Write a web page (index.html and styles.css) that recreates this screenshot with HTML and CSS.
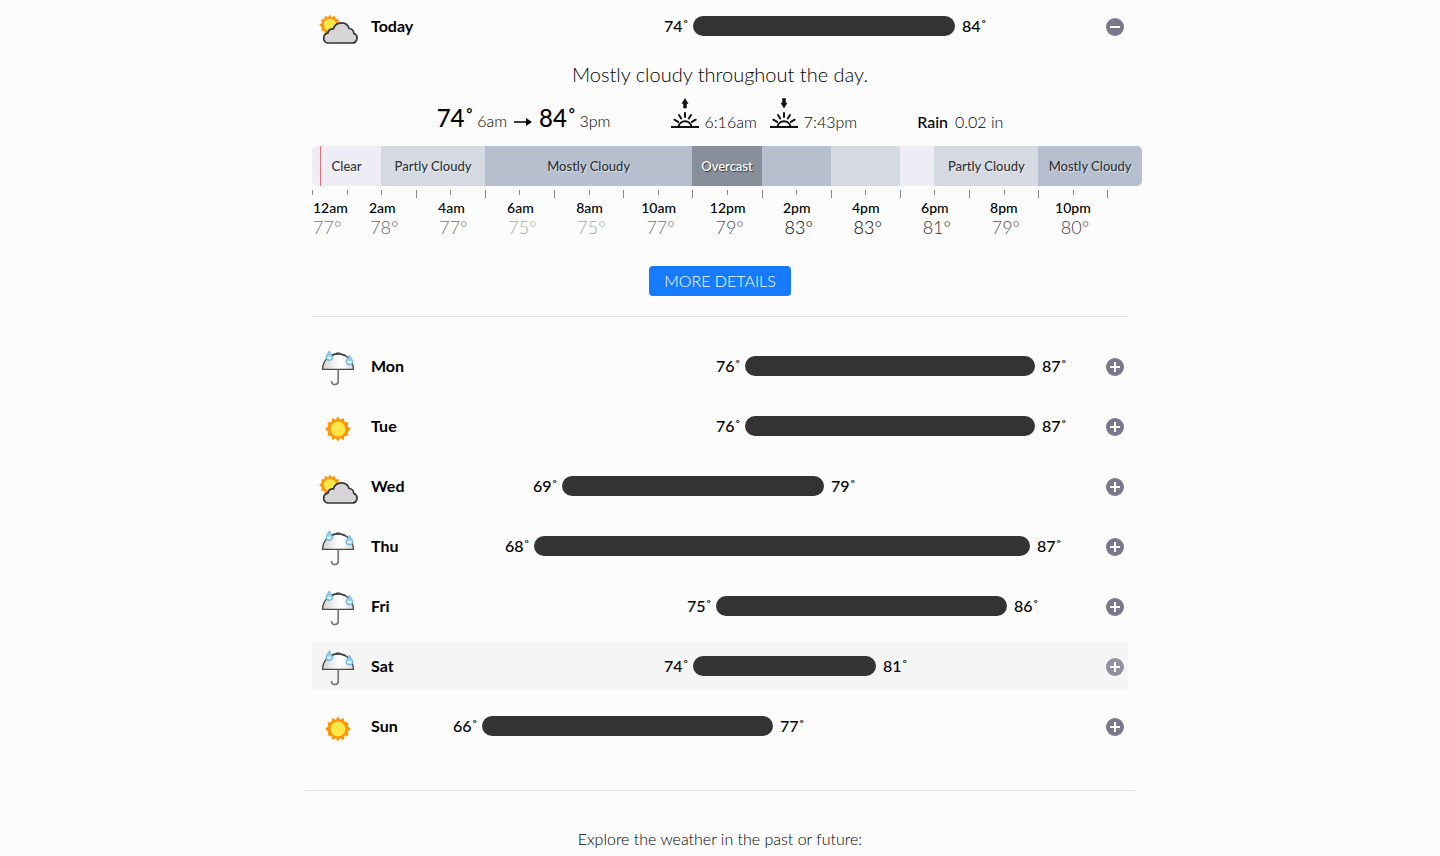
FILE: index.html
```html
<!DOCTYPE html>
<html lang="en">
<head>
<meta charset="utf-8">
<meta name="viewport" content="width=device-width, initial-scale=1">
<title>Weekly forecast</title>
<link rel="stylesheet" href="styles.css">
</head>
<body>
<svg class="sprite" width="0" height="0" aria-hidden="true">
  <defs>
    <linearGradient id="canopy" x1="0" x2="1" y1="0" y2="0">
      <stop offset="0" stop-color="#cfcfcf"/><stop offset=".35" stop-color="#f0f0f0"/><stop offset=".6" stop-color="#fff"/><stop offset="1" stop-color="#d8d8d8"/>
    </linearGradient>
    <symbol id="star" viewBox="0 0 26 26">
      <path fill="#ff9505" d="M13 .5l2.200 3.200 3.600-1.600.8 3.900 3.900.5-.8 3.800L26 13l-3.300 2.700.8 3.800-3.900.5-.8 3.900-3.600-1.600L13 25.500l-2.200-3.200-3.600 1.600-.8-3.900-3.900-.5.8-3.800L0 13l3.300-2.700-.8-3.800 3.900-.5.8-3.900 3.600 1.600z"/>
      <circle cx="13" cy="13" r="7.400" fill="#ffe74a"/>
    </symbol>
    <symbol id="sunny" viewBox="0 0 40 40">
      <use href="#star" x="7" y="8" width="26" height="26"/>
    </symbol>
    <symbol id="partly" viewBox="0 0 40 40">
      <use href="#star" x="1" y="6" width="22" height="22"/>
      <path fill="#d5d5d5" stroke="#333" stroke-width="1.700" stroke-linejoin="round" d="M9.500 35h24.500a4.900 4.900 0 0 0 1.800-9.500 5 5 0 0 0-4.600-5 8.300 8.300 0 0 0-15.800.4 4.600 4.600 0 0 0-5.500 4.300A5 5 0 0 0 9.500 35z"/>
    </symbol>
    <symbol id="rain" viewBox="0 0 40 40">
      <path fill="url(#canopy)" stroke="#484848" stroke-width="1.300" stroke-linejoin="round" d="M4.500 21.300C4.800 12 11.500 6 20 6s15.200 6 15.500 15.300z"/>
      <path fill="none" stroke="#444" stroke-width="1.500" stroke-linecap="round" d="M13 7.500q7-3.500 14 0M18.500 5.200h3"/>
      <path fill="none" stroke="#777" stroke-width="1.700" stroke-linecap="round" d="M20.200 22v11.500c0 4-6.600 4-6.600.2"/>
      <path fill="#8fd0f5" stroke="#5ba6d6" stroke-width=".8" d="M11.300 2.800c1 2.700 3.300 4.700 3.300 6.500a3.300 3.300 0 0 1-6.600 0c0-1.800 2.300-3.800 3.300-6.500zM31.500 7.300c1 2.700 3.400 4.500 3.400 6.400a3.400 3.400 0 0 1-6.800 0c0-1.900 2.400-3.700 3.400-6.400z"/>
      <path fill="#f2fbff" d="M9 8.800h4.600a2.300 2.300 0 0 1-4.600 0zM29.200 13.200h4.600a2.300 2.300 0 0 1-4.600 0z"/>
    </symbol>
    <symbol id="horizon" viewBox="0 0 28 32">
      <path fill="none" stroke="#111" stroke-width="2" d="M0 29h28"/>
      <path fill="none" stroke="#111" stroke-width="2" stroke-linecap="round" d="M7.500 28.500a6.600 6.500 0 0 1 13 0M14 15v4M8 17l2.200 3.500M20 17l-2.200 3.500M3.300 21.700l3.800 2.200M24.700 21.700l-3.800 2.200"/>
    </symbol>
  </defs>
</svg>

<main class="forecast">
  <section class="week">
    <article class="day">
      <svg class="day-icon" role="img" aria-label="Partly cloudy"><use href="#partly"/></svg>
      <h2 class="day-name">Today</h2>
      <div class="range"><span class="low" style="width:38.92%">74˚</span><span class="bar" style="width:40.31%"></span><span class="high">84˚</span></div>
      <button class="toggle" type="button" aria-expanded="true" aria-label="Hide Today details"><svg viewBox="0 0 18 18"><path d="M4 9h10"/></svg></button>
    </article>

    <section class="details">
      <p class="summary">Mostly cloudy throughout the day.</p>
      <div class="facts">
        <div class="extremes">
          <span class="temp">74˚</span><span class="time">6am</span>
          <svg class="arrow" viewBox="0 0 18 12" aria-hidden="true"><path fill="none" stroke="#000" stroke-width="1.500" d="M0 6h14"/><path d="M12 2l6 4-6 4z"/></svg>
          <span class="temp">84˚</span><span class="time">3pm</span>
        </div>
        <div class="sun-times">
          <svg class="sun-icon" viewBox="0 0 28 32" role="img" aria-label="Sunrise"><use href="#horizon"/><path fill="#111" stroke="#111" stroke-width=".6" stroke-linejoin="round" d="M14 .5l3 5h-1.600V10h-2.800V5.500H11z"/></svg>
          <span class="time">6:16am</span>
          <svg class="sun-icon" viewBox="0 0 28 32" role="img" aria-label="Sunset"><use href="#horizon"/><path fill="#111" stroke="#111" stroke-width=".6" stroke-linejoin="round" d="M14 10l3-5h-1.600V.5h-2.800V5H11z"/></svg>
          <span class="time">7:43pm</span>
        </div>
        <div class="rain"><strong>Rain</strong><span>0.02 in</span></div>
      </div>

      <div class="timeline">
        <div class="sky">
          <span class="clear h2">Clear</span>
          <span class="partly h3">Partly Cloudy</span>
          <span class="mostly h6">Mostly Cloudy</span>
          <span class="overcast h2">Overcast</span>
          <span class="mostly h2"></span>
          <span class="partly h2"></span>
          <span class="clear h1"></span>
          <span class="partly h3">Partly Cloudy</span>
          <span class="mostly h3">Mostly Cloudy</span>
          <i class="now"></i>
        </div>
        <div class="ticks"><i></i><i></i><i></i><i></i><i></i><i></i><i></i><i></i><i></i><i></i><i></i><i></i><i></i><i></i><i></i><i></i><i></i><i></i><i></i><i></i><i></i><i></i><i></i><i></i></div>
        <div class="hours">
          <div class="hour first"><b>12am</b><span class="t77">77°</span></div>
          <div class="hour"><b>2am</b><span class="t78">78°</span></div>
          <div class="hour"><b>4am</b><span class="t77">77°</span></div>
          <div class="hour"><b>6am</b><span class="t75">75°</span></div>
          <div class="hour"><b>8am</b><span class="t75">75°</span></div>
          <div class="hour"><b>10am</b><span class="t77">77°</span></div>
          <div class="hour"><b>12pm</b><span class="t79">79°</span></div>
          <div class="hour"><b>2pm</b><span class="t83">83°</span></div>
          <div class="hour"><b>4pm</b><span class="t83">83°</span></div>
          <div class="hour"><b>6pm</b><span class="t81">81°</span></div>
          <div class="hour"><b>8pm</b><span class="t79">79°</span></div>
          <div class="hour"><b>10pm</b><span class="t80">80°</span></div>
        </div>
      </div>
      <button class="more" type="button">MORE DETAILS</button>
    </section>

    <article class="day">
      <svg class="day-icon" role="img" aria-label="Rain"><use href="#rain"/></svg>
      <h2 class="day-name">Mon</h2>
      <div class="range"><span class="low" style="width:46.92%">76˚</span><span class="bar" style="width:44.62%"></span><span class="high">87˚</span></div>
      <button class="toggle" type="button" aria-expanded="false" aria-label="Show Monday details"><svg viewBox="0 0 18 18"><path d="M4 9h10M9 4v10"/></svg></button>
    </article>
    <article class="day">
      <svg class="day-icon" role="img" aria-label="Clear"><use href="#sunny"/></svg>
      <h2 class="day-name">Tue</h2>
      <div class="range"><span class="low" style="width:46.92%">76˚</span><span class="bar" style="width:44.62%"></span><span class="high">87˚</span></div>
      <button class="toggle" type="button" aria-expanded="false" aria-label="Show Tuesday details"><svg viewBox="0 0 18 18"><path d="M4 9h10M9 4v10"/></svg></button>
    </article>
    <article class="day">
      <svg class="day-icon" role="img" aria-label="Partly cloudy"><use href="#partly"/></svg>
      <h2 class="day-name">Wed</h2>
      <div class="range"><span class="low" style="width:18.77%">69˚</span><span class="bar" style="width:40.31%"></span><span class="high">79˚</span></div>
      <button class="toggle" type="button" aria-expanded="false" aria-label="Show Wednesday details"><svg viewBox="0 0 18 18"><path d="M4 9h10M9 4v10"/></svg></button>
    </article>
    <article class="day">
      <svg class="day-icon" role="img" aria-label="Rain"><use href="#rain"/></svg>
      <h2 class="day-name">Thu</h2>
      <div class="range"><span class="low" style="width:14.46%">68˚</span><span class="bar" style="width:76.31%"></span><span class="high">87˚</span></div>
      <button class="toggle" type="button" aria-expanded="false" aria-label="Show Thursday details"><svg viewBox="0 0 18 18"><path d="M4 9h10M9 4v10"/></svg></button>
    </article>
    <article class="day">
      <svg class="day-icon" role="img" aria-label="Rain"><use href="#rain"/></svg>
      <h2 class="day-name">Fri</h2>
      <div class="range"><span class="low" style="width:42.46%">75˚</span><span class="bar" style="width:44.77%"></span><span class="high">86˚</span></div>
      <button class="toggle" type="button" aria-expanded="false" aria-label="Show Friday details"><svg viewBox="0 0 18 18"><path d="M4 9h10M9 4v10"/></svg></button>
    </article>
    <article class="day active">
      <svg class="day-icon" role="img" aria-label="Rain"><use href="#rain"/></svg>
      <h2 class="day-name">Sat</h2>
      <div class="range"><span class="low" style="width:38.92%">74˚</span><span class="bar" style="width:28.15%"></span><span class="high">81˚</span></div>
      <button class="toggle" type="button" aria-expanded="false" aria-label="Show Saturday details"><svg viewBox="0 0 18 18"><path d="M4 9h10M9 4v10"/></svg></button>
    </article>
    <article class="day">
      <svg class="day-icon" role="img" aria-label="Clear"><use href="#sunny"/></svg>
      <h2 class="day-name">Sun</h2>
      <div class="range"><span class="low" style="width:6.46%">66˚</span><span class="bar" style="width:44.77%"></span><span class="high">77˚</span></div>
      <button class="toggle" type="button" aria-expanded="false" aria-label="Show Sunday details"><svg viewBox="0 0 18 18"><path d="M4 9h10M9 4v10"/></svg></button>
    </article>
  </section>
  <p class="explore">Explore the weather in the past or future:</p>
</main>
</body>
</html>
```

FILE: styles.css
```css
* { box-sizing: border-box; }

body {
  margin: 0;
  background: #fcfcfc;
  color: #000;
  font: 300 16px/20px Lato, sans-serif;
}

h2, p { margin: 0; }
.sprite { display: block; }

.forecast {
  max-width: 830px;
  margin: 0 auto;
  padding-top: 2px;
}

.week { padding: 0 7px; }

.day {
  display: flex;
  align-items: center;
  height: 48px;
  padding-left: 6px;
  border-radius: 3px;
}
.day + .day { margin-top: 12px; }
.day.active { background: #f5f5f5; }

.day-icon {
  width: 40px;
  height: 40px;
  margin-top: 4px;
}
.day-name {
  width: 82px;
  padding-left: 13px;
  font-size: 16px;
  font-weight: 700;
}

.range {
  display: flex;
  flex: 1;
  align-items: center;
  font-weight: 500;
}
.low {
  flex: none;
  padding-right: 4px;
  text-align: right;
}
.bar {
  flex: none;
  height: 20px;
  border-radius: 10px;
  background: #333;
}
.high { padding-left: 7px; }

.toggle {
  width: 38px;
  height: 38px;
  margin-top: 2px;
  padding: 0 4px 0 16px;
  border: 0;
  background: none;
  cursor: pointer;
}
.toggle svg {
  display: block;
  width: 18px;
  height: 18px;
  border-radius: 50%;
  background: #7a778d;
}
.toggle path { stroke: #fff; stroke-width: 2; }
.active .toggle { opacity: 0.8; }

.details {
  display: flex;
  flex-direction: column;
  align-items: center;
  margin-bottom: 25px;
  padding: 12px 0 20px;
  border-bottom: 1px solid #e0e0e0;
}
.summary { font-size: 20px; line-height: 24px; }

.facts {
  display: flex;
  align-self: stretch;
  align-items: flex-end;
  justify-content: center;
  gap: 60px;
  height: 46px;
}
.extremes, .sun-times, .rain { display: flex; align-items: baseline; }
.extremes { gap: 3px; padding-bottom: 1px; }
.temp { font-size: 24px; font-weight: 500; }
.arrow { width: 18px; height: 12px; margin: 4px 4px 0; align-self: center; }
.sun-times { align-items: flex-end; gap: 6px; }
.sun-icon { width: 28px; height: 32px; margin-bottom: 2px; }
.sun-times .time + .sun-icon { margin-left: 7px; }
.rain { gap: 7px; }
.rain strong { font-weight: 500; }

.timeline { align-self: stretch; margin: 14px -14px 0 0; }
.sky {
  position: relative;
  display: grid;
  grid-template-columns: repeat(24, 1fr);
  height: 40px;
  overflow: hidden;
  border-radius: 5px;
  color: #333;
  font-size: 13px;
  font-weight: 500;
  line-height: 40px;
  text-align: center;
  text-shadow: 1px 1px 1px rgba(255, 255, 255, 0.6);
  white-space: nowrap;
}
.h1 { grid-column: span 1; }
.h2 { grid-column: span 2; }
.h3 { grid-column: span 3; }
.h6 { grid-column: span 6; }
.clear { background: #eeecf5; }
.partly { background: #d5dae2; }
.mostly { background: #b6bfcd; }
.overcast {
  background: #878f9a;
  color: #fff;
  text-shadow: 1px 1px 1px rgba(0, 0, 0, 0.6);
}
.now {
  position: absolute;
  top: 0;
  bottom: 0;
  left: 1%;
  width: 1px;
  background: #f06a72;
}

.ticks {
  display: grid;
  grid-template-columns: repeat(24, 1fr);
  height: 8px;
  margin-top: 4px;
}
.ticks i { height: 5px; border-left: 1px solid #888; }
.ticks i:nth-child(even):not(:nth-child(2)) { height: 8px; }

.hours {
  display: grid;
  grid-template-columns: 1fr repeat(11, 2fr) 1fr;
}
.hour {
  display: flex;
  flex-direction: column;
  align-items: center;
  font-size: 14px;
}
.hour b { font-weight: 500; }
.hour span {
  padding-left: 4px;
  font-size: 18px;
  line-height: 18px;
}
.first { align-items: flex-start; padding-left: 1px; }
.hour.first span { padding-left: 0; }
.t75 { color: #aaa; }
.t77 { color: #777; }
.t78 { color: #666; }
.t79 { color: #555; }
.t80 { color: #444; }
.t81 { color: #333; }
.t83 { color: #000; }

.more {
  height: 30px;
  margin-top: 30px;
  padding: 0 15px;
  border: 0;
  border-radius: 4px;
  background: #177bff;
  color: #fff;
  font: inherit;
  cursor: pointer;
}

.explore {
  margin-top: 40px;
  padding-top: 38px;
  border-top: 1px solid #e0e0e0;
  text-align: center;
}
```
